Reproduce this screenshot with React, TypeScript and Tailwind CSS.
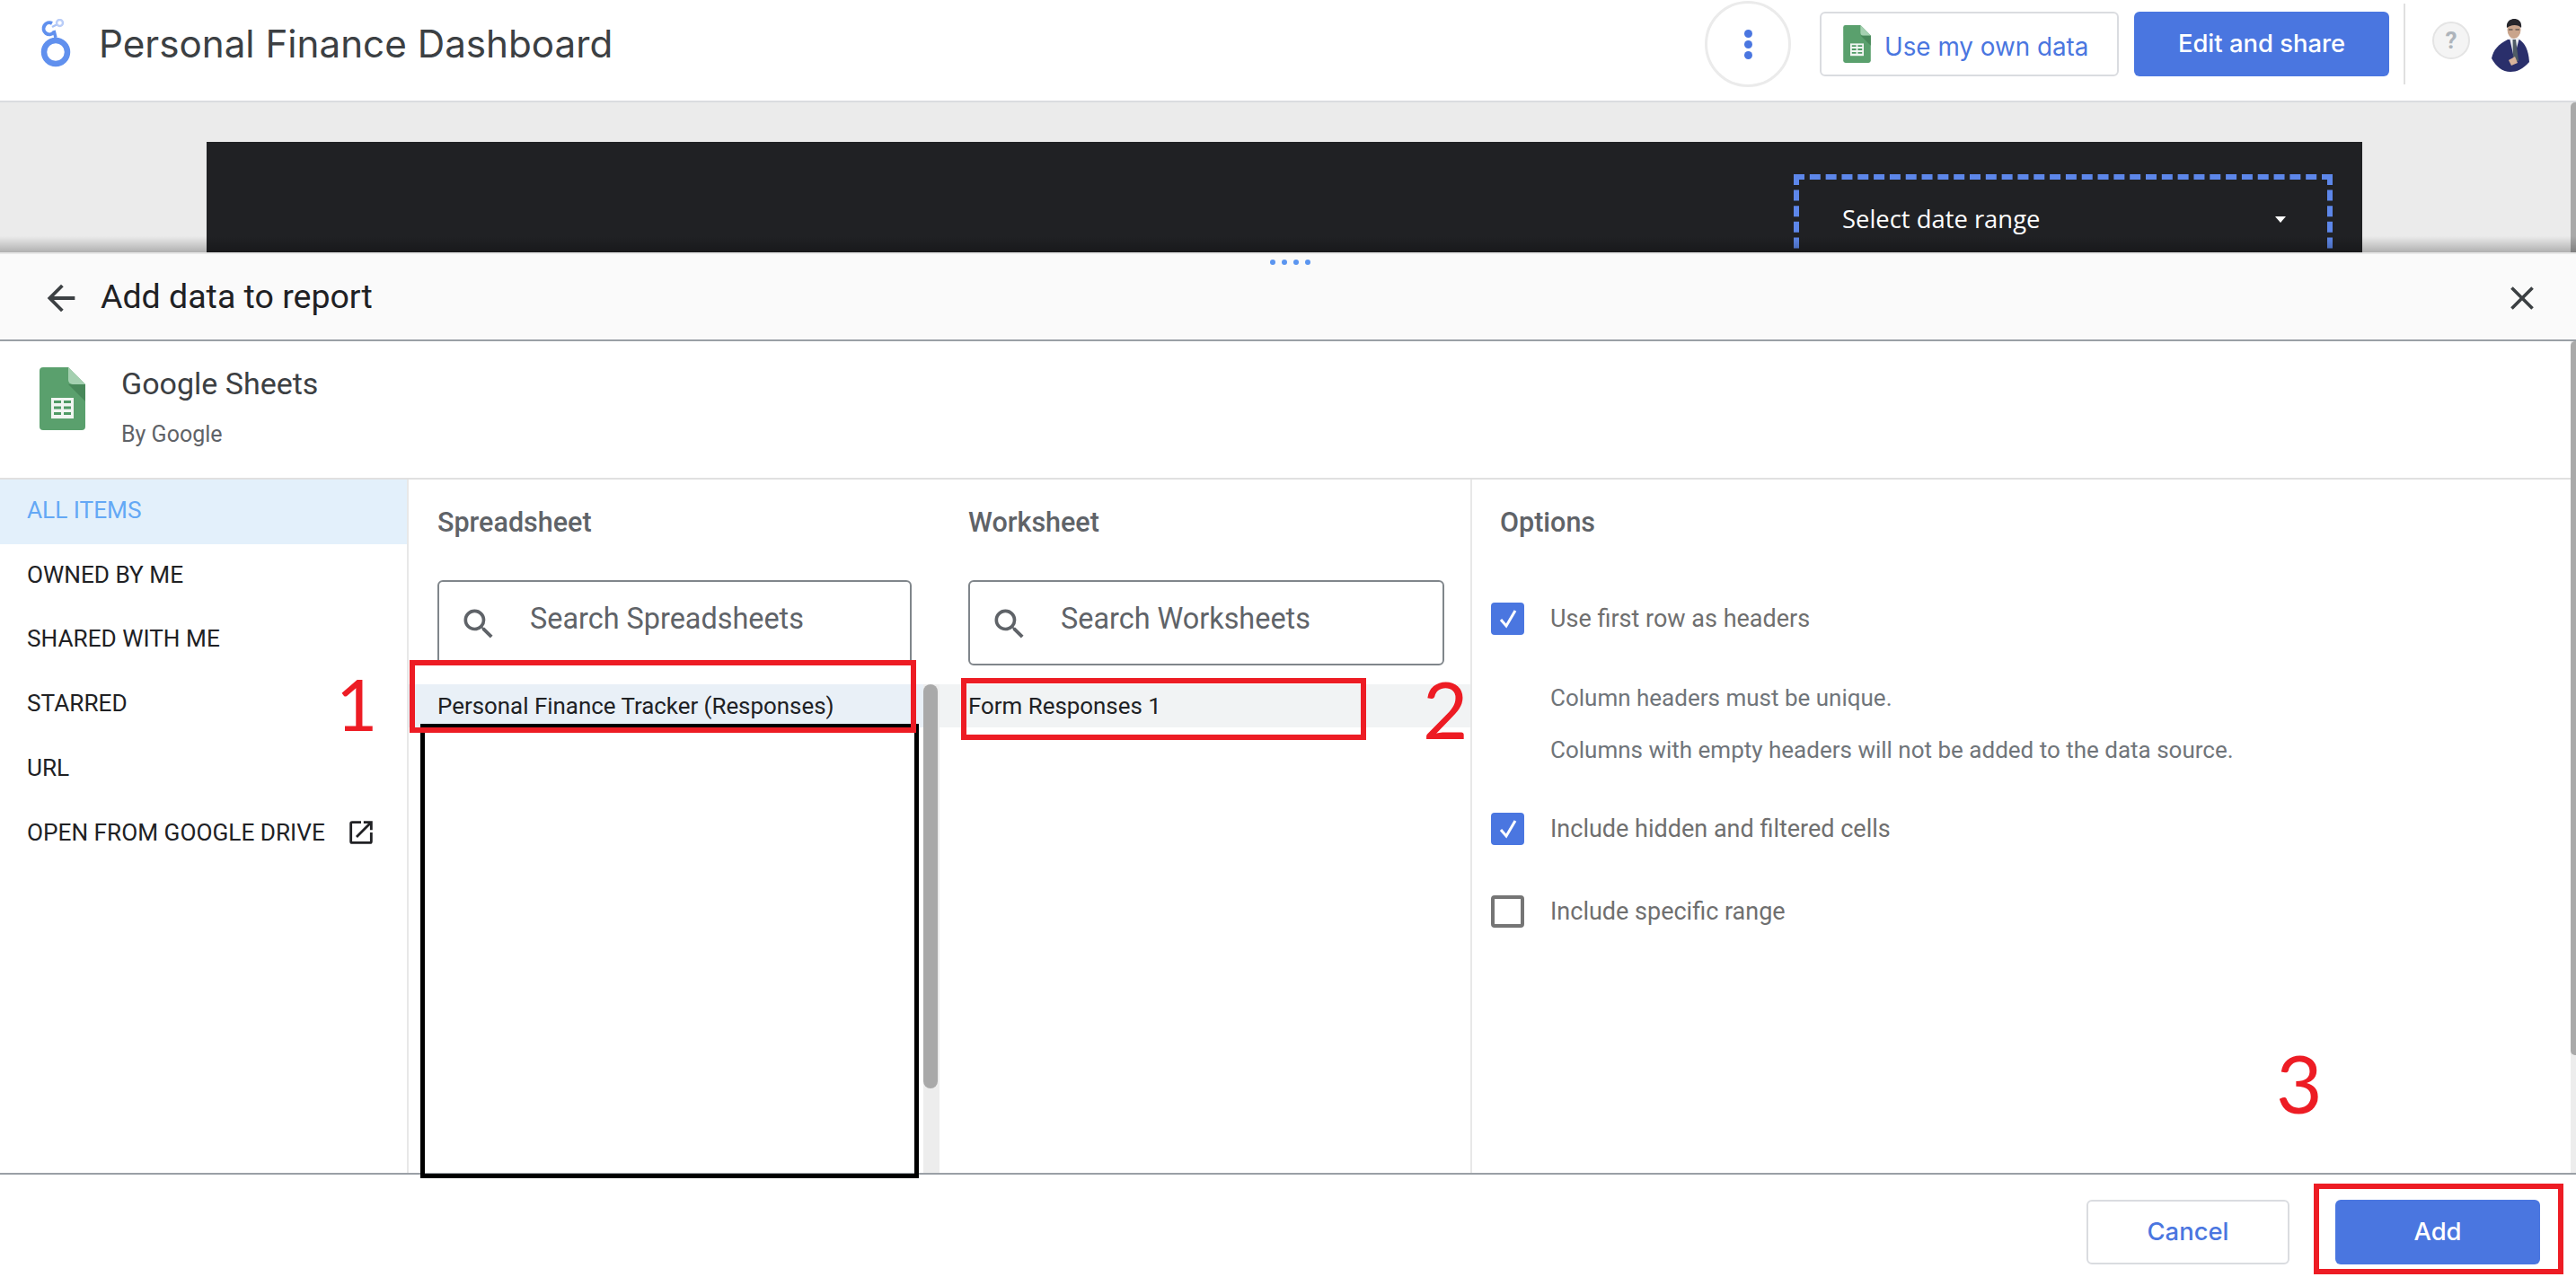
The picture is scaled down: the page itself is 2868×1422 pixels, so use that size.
import type { ReactNode } from 'react';

const BLUE = 'bg-[#4a76e0]';
const ROBOTO = "font-['Roboto',sans-serif]";
const RED_BOX = 'absolute border-[6px] border-[#ed1c24]';
const RED_DIGIT = "absolute font-['Lato',sans-serif] leading-none text-[#ed1c24]";

const LookerLogo = () => (
  <svg width="36" height="56" viewBox="0 0 36 56" fill="none" className="shrink-0">
    <circle cx="18" cy="37" r="13" stroke="#6090ee" strokeWidth="6.5" />
    <path d="M18 21 L16 13" stroke="#6090ee" strokeWidth="3.5" />
    <path d="M16 15 A6.5 6.5 0 1 1 14 5" stroke="#6090ee" strokeWidth="4" />
    <path d="M14 9 L20 6" stroke="#a9c2f5" strokeWidth="2.5" />
    <circle cx="22.5" cy="4.5" r="3.5" stroke="#b9cdf8" strokeWidth="2.5" />
  </svg>
);

const SheetsIcon = ({ className }: { className: string }) => (
  <svg viewBox="0 0 51 70" className={className}>
    <path d="M4 0H32L51 19V66a4 4 0 0 1-4 4H4a4 4 0 0 1-4-4V4a4 4 0 0 1 4-4Z" fill="#5aa06d" />
    <path d="M32 19L51 38V19Z" fill="#48885a" />
    <path d="M32 0L51 19H37a5 5 0 0 1-5-5Z" fill="#a4d0b0" />
    <rect x="13" y="34" width="25" height="23" fill="#f1f5f2" />
    <path d="M16 37h8v3h-8zM27 37h8v3h-8zM16 43.5h8v3h-8zM27 43.5h8v3h-8zM16 50h8v3h-8zM27 50h8v3h-8z" fill="#4f9a65" />
  </svg>
);

const Avatar = () => (
  <svg width="44" height="60" viewBox="0 0 44 60" className="shrink-0">
    <path d="M1 44C3 34 9 28 19 23L32 23C38 27 42 34 43 48C36 56 29 59 22 59C13 59 6 53 1 44Z" fill="#2a2f6b" />
    <path d="M21 21L26 44L32 21Z" fill="#eef0f4" />
    <path d="M24.5 23h3.5l3 24h-6Z" fill="#4f5c66" />
    <ellipse cx="26" cy="12" rx="7.5" ry="10" fill="#c9a48c" />
    <path d="M18 10C17 3 22 0 26 0C31 0 35 3 34 10C31 6 23 6 18 10Z" fill="#26262c" />
    <path d="M20 12h4.5M27.5 12h4.5" stroke="#3a3a3a" strokeWidth="1.2" />
    <path d="M20 46l7-4 3 7-7 3Z" fill="#d8b39b" />
  </svg>
);

const SearchIcon = () => (
  <svg width="44" height="44" viewBox="0 0 24 24" className="ml-[-2px] mt-[2px] shrink-0 fill-[#5f6368]">
    <path d="M15.5 14h-.79l-.28-.27A6.47 6.47 0 0 0 16 9.5 6.5 6.5 0 1 0 9.5 16c1.61 0 3.09-.59 4.23-1.57l.27.28v.79l5 4.99L20.49 19l-4.99-5Zm-6 0C7.01 14 5 11.99 5 9.5S7.01 5 9.5 5 14 7.01 14 9.5 11.99 14 9.5 14Z" />
  </svg>
);

const Checkbox = ({ checked }: { checked?: boolean }) =>
  checked ? (
    <span className={`flex h-[36px] w-[37px] shrink-0 items-center justify-center rounded-[4px] ${BLUE}`}>
      <svg width="26" height="24" viewBox="0 0 26 24" fill="none">
        <path d="M5 13L11 20L21 3" stroke="white" strokeWidth="3" />
      </svg>
    </span>
  ) : (
    <span className="h-[36px] w-[37px] shrink-0 rounded-[4px] border-[4px] border-[#757575] bg-white" />
  );

const SideItem = ({ label, active, children }: { label: string; active?: boolean; children?: ReactNode }) => (
  <div className={`flex h-[71.8px] items-center pb-[3px] pl-[30px] text-[26.2px] ${active ? 'bg-[#e3f0fb] text-[#64a8f5]' : 'text-[#202124]'}`}>
    {label}
    {children}
  </div>
);

const SearchBox = ({ placeholder }: { placeholder: string }) => (
  <div className="mt-[16px] flex h-[95px] items-center rounded-[6px] border-[2.5px] border-[#80868b] pl-[24px]">
    <SearchIcon />
    <span className="mb-[8px] ml-[35px] text-[32.4px] text-[#5f6368]">{placeholder}</span>
  </div>
);

const ColumnTitle = ({ children }: { children: ReactNode }) => (
  <h2 className="flex h-[96px] items-center text-[30.5px] font-medium text-[#5f6368]">{children}</h2>
);

const OptionRow = ({ label, checked, className }: { label: string; checked?: boolean; className: string }) => (
  <div className={`flex items-center gap-[29px] pl-[21px] text-[27px] leading-[34px] text-[#6f6f6f] ${className}`}>
    <Checkbox checked={checked} />
    <span>{label}</span>
  </div>
);

export default function App() {
  return (
    <div className={`relative flex h-[1422px] w-[2868px] flex-col overflow-hidden bg-white ${ROBOTO}`}>
      {/* top app bar */}
      <header className="flex h-[114px] shrink-0 items-center border-b-2 border-[#dadce0] bg-white pb-[14px]">
        <div className="ml-[44px]">
          <LookerLogo />
        </div>
        <h1 className="ml-[30px] flex-1 font-['Inter',sans-serif] text-[42.2px] text-[#3c4043]">Personal Finance Dashboard</h1>
        <div className="flex h-[96px] w-[96px] items-center justify-center rounded-full border-[3px] border-[#ebebeb]">
          <span className="flex flex-col gap-[3px]">
            <span className={`h-[9px] w-[9px] rounded-full ${BLUE}`} />
            <span className={`h-[9px] w-[9px] rounded-full ${BLUE}`} />
            <span className={`h-[9px] w-[9px] rounded-full ${BLUE}`} />
          </span>
        </div>
        <button className="ml-[32px] flex h-[72px] w-[333px] items-center rounded-[6px] border-2 border-[#dadce0] pl-[24px] font-['Inter',sans-serif] text-[27.8px] text-[#4a76e0]">
          <SheetsIcon className="h-[42px] w-[31px]" />
          <span className="ml-[15px] mt-[8px]">Use my own data</span>
        </button>
        <button className={`ml-[17px] h-[72px] w-[284px] rounded-[6px] font-['Inter',sans-serif] text-[27.4px] font-medium text-white ${BLUE}`}>
          Edit and share
        </button>
        <div className="ml-[16px] h-[90px] w-[2px] bg-[#e0e0e0]" />
        <div className="ml-[30px] mt-[-8px] flex h-[42px] w-[42px] items-center justify-center rounded-full border-2 border-[#e4e4e4] bg-[#f4f4f4] text-[26px] font-bold text-[#aeb4bb]">?</div>
        <div className="ml-[23px] mr-[51px] mt-[4px]">
          <Avatar />
        </div>
      </header>

      {/* report canvas behind the panel */}
      <section className="flex h-[167px] shrink-0 bg-[#ebebeb]">
        <div className="ml-[230px] mt-[44px] h-[123px] w-[2400px] bg-[#202124] pl-[54px]">
          <div className="ml-[1713px] mt-[36px] flex h-[100px] w-[600px] items-center border-[6px] border-b-0 border-dashed border-[#5d87ea] pb-[6px] pl-[48px] pr-[46px] font-['Open_Sans',sans-serif] text-[27.4px] text-white">
            <span className="flex-1">Select date range</span>
            <span className="h-0 w-0 border-x-[6px] border-t-[7px] border-x-transparent border-t-white" />
          </div>
        </div>
        <div className="ml-auto h-full w-[6px] rounded-tl-[5px] bg-[#a9a9a9]" />
      </section>
      <div className="absolute left-0 top-[263px] h-[18px] w-full bg-gradient-to-b from-transparent to-[#00000040]" />

      {/* add data panel */}
      <main className="relative flex min-h-0 flex-1 flex-col">
        <div className="flex h-[99px] shrink-0 items-center border-y-2 border-b-[#9aa0a6] border-t-[#e8e8e8] bg-[#fafafa]">
          <svg width="46" height="46" viewBox="0 0 24 24" className="ml-[45px] mt-[2px] shrink-0 fill-[#3c4043]">
            <path d="M20 11H7.83l5.59-5.59L12 4l-8 8 8 8 1.41-1.41L7.83 13H20v-2Z" />
          </svg>
          <span className="ml-[21px] flex-1 text-[37.5px] text-[#202124]">Add data to report</span>
          <svg width="44" height="44" viewBox="0 0 24 24" className="mr-[38px] mt-[2px] shrink-0 fill-[#3c4043]">
            <path d="M19 6.41 17.59 5 12 10.59 6.41 5 5 6.41 10.59 12 5 17.59 6.41 19 12 13.41 17.59 19 19 17.59 13.41 12 19 6.41Z" />
          </svg>
          <span className="absolute left-[1414px] top-[8px] flex gap-[7px]">
            <i className="h-[6px] w-[6px] rounded-full bg-[#5b95f0]" />
            <i className="h-[6px] w-[6px] rounded-full bg-[#5b95f0]" />
            <i className="h-[6px] w-[6px] rounded-full bg-[#5b95f0]" />
            <i className="h-[6px] w-[6px] rounded-full bg-[#5b95f0]" />
          </span>
        </div>

        <div className="flex min-h-0 flex-1">
          <div className="flex min-w-0 flex-1 flex-col">
            {/* connector title */}
            <div className="flex h-[154px] shrink-0 border-b-2 border-[#e0e0e0]">
              <SheetsIcon className="ml-[44px] mt-[29px] h-[70px] w-[51px]" />
              <div className="ml-[40px]">
                <div className="mt-[26px] text-[34px] leading-[42px] text-[#3c4043]">Google Sheets</div>
                <div className="mt-[21px] text-[25px] leading-[30px] text-[#5f6368]">By Google</div>
              </div>
            </div>

            <div className="flex min-h-0 flex-1">
              <nav className="w-[455px] shrink-0 border-r-2 border-[#e8e8e8]">
                <SideItem label="ALL ITEMS" active />
                <SideItem label="OWNED BY ME" />
                <SideItem label="SHARED WITH ME" />
                <SideItem label="STARRED" />
                <SideItem label="URL" />
                <SideItem label="OPEN FROM GOOGLE DRIVE">
                  <svg width="34" height="34" viewBox="0 0 24 24" className="ml-[23px] shrink-0 fill-[#202124]">
                    <path d="M19 19H5V5h7V3H5a2 2 0 0 0-2 2v14a2 2 0 0 0 2 2h14a2 2 0 0 0 2-2v-7h-2v7ZM14 3v2h3.59l-9.83 9.83 1.41 1.41L19 6.41V10h2V3h-7Z" />
                  </svg>
                </SideItem>
              </nav>

              <section className="flex w-[591px] shrink-0 flex-col">
                <div className="h-[228px] shrink-0 pl-[32px] pr-[31px]">
                  <ColumnTitle>Spreadsheet</ColumnTitle>
                  <SearchBox placeholder="Search Spreadsheets" />
                </div>
                <div className="flex min-h-0 flex-1">
                  <div className="flex-1">
                    <div className="flex h-[48px] items-center bg-[#e9f0f7] pl-[32px] text-[25.9px] text-[#202124]">Personal Finance Tracker (Responses)</div>
                  </div>
                  <div className="w-[18px] bg-[#ededed]">
                    <div className="h-[450px] w-[16px] rounded-b-[8px] rounded-t-[8px] bg-[#a9a9a9]" />
                  </div>
                </div>
              </section>

              <section className="flex w-[593px] shrink-0 flex-col border-r-2 border-[#e8e8e8]">
                <div className="h-[228px] shrink-0 pl-[32px] pr-[29px]">
                  <ColumnTitle>Worksheet</ColumnTitle>
                  <SearchBox placeholder="Search Worksheets" />
                </div>
                <div className="flex h-[48px] items-center bg-[#f1f3f4] pl-[32px] text-[25.9px] text-[#202124]">Form Responses 1</div>
              </section>

              <section className="min-w-0 flex-1">
                <div className="pl-[31px]">
                  <ColumnTitle>Options</ColumnTitle>
                </div>
                <OptionRow className="mt-[41px]" label="Use first row as headers" checked />
                <p className="ml-[87px] mt-[53px] text-[26px] leading-[34px] text-[#70757a]">Column headers must be unique.</p>
                <p className="ml-[87px] mt-[24px] text-[26px] leading-[34px] text-[#70757a]">Columns with empty headers will not be added to the data source.</p>
                <OptionRow className="mt-[53px]" label="Include hidden and filtered cells" checked />
                <OptionRow className="mt-[56px]" label="Include specific range" />
              </section>
            </div>
          </div>

          {/* panel scrollbar */}
          <div className="w-[6px] shrink-0 bg-[#ededed]">
            <div className="h-[795px] rounded-bl-[5px] rounded-tl-[5px] bg-[#a9a9a9]" />
          </div>
        </div>

        <footer className="flex h-[116px] shrink-0 items-start justify-end gap-[51px] border-t-2 border-[#9aa0a6] bg-white pr-[40px] pt-[28px] font-['Inter',sans-serif] text-[27.4px] font-medium">
          <button className="h-[72px] w-[226px] rounded-[6px] border-2 border-[#dadce0] text-[#4a76e0]">Cancel</button>
          <button className={`h-[72px] w-[228px] rounded-[6px] text-white ${BLUE}`}>Add</button>
        </footer>
      </main>

      {/* tutorial markup drawn over the screenshot */}
      <div className="absolute left-[468px] top-[806px] h-[506px] w-[555px] border-[5px] border-black" />
      <div className={`${RED_BOX} left-[456px] top-[735px] h-[81px] w-[564px]`} />
      <div className={`${RED_BOX} left-[1070px] top-[755px] h-[69px] w-[451px]`} />
      <div className={`${RED_BOX} left-[2576px] top-[1318px] h-[101px] w-[278px]`} />
      <span className={`${RED_DIGIT} left-[374px] top-[743px] text-[80px]`}>1</span>
      <span className={`${RED_DIGIT} left-[1584px] top-[746px] text-[87px]`}>2</span>
      <span className={`${RED_DIGIT} left-[2534px] top-[1161px] text-[89px]`}>3</span>
    </div>
  );
}
